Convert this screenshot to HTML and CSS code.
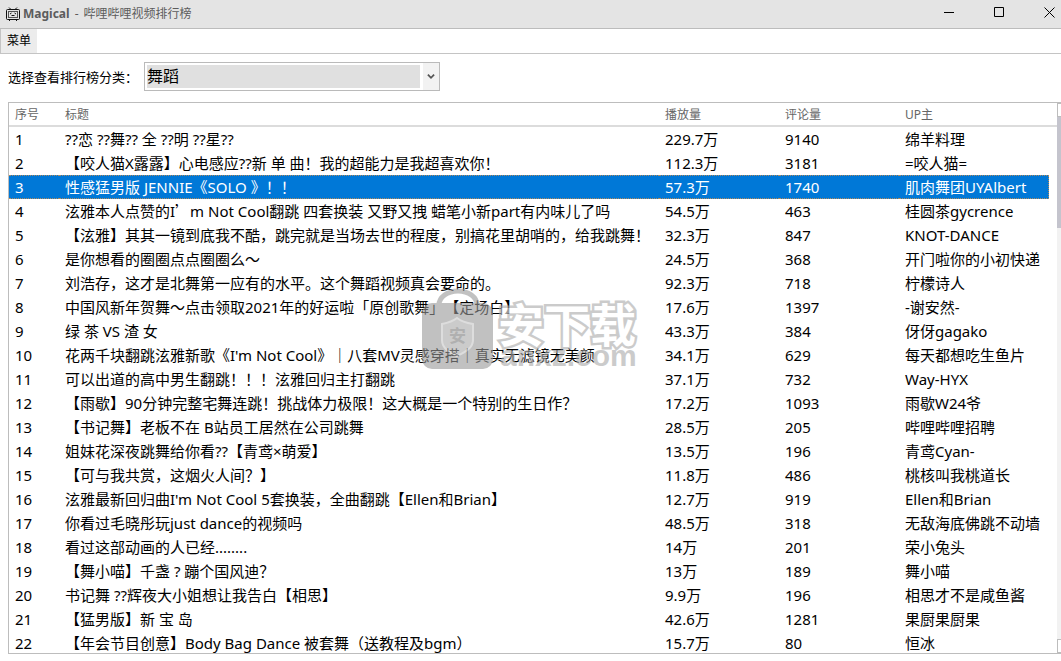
FILE: index.html
```html
<!DOCTYPE html>
<html lang="zh-CN">
<head>
<meta charset="utf-8">
<meta name="viewport" content="width=device-width, initial-scale=1">
<title>Magical - 哔哩哔哩视频排行榜</title>
<link rel="stylesheet" href="styles.css">
</head>
<body>
<div class="window">
  <header class="titlebar">
    <svg class="app-icon" viewBox="0 0 14 14" fill="none" stroke="#111" aria-hidden="true"><path d="M3 .5 5 2.5M11 .5 9 2.5"/><rect x=".5" y="2.5" width="13" height="10" rx="1"/><rect x="2.5" y="4.5" width="9" height="6" stroke="#555"/><path d="M4 7 5.5 6M10 7 8.5 6M5.5 8.5h3M3 13.5h1M10 13.5h1"/></svg>
    <h1 class="title"><b>Magical</b> <span>-</span> <span>哔哩哔哩视频排行榜</span></h1>
    <div class="controls">
      <button class="control" aria-label="最小化"><svg viewBox="0 0 11 11"><path d="M0 5.5h10"/></svg></button>
      <button class="control" aria-label="最大化"><svg viewBox="0 0 11 11"><path d="M.5.5h9v9h-9z"/></svg></button>
      <button class="control control-close" aria-label="关闭"><svg viewBox="0 0 11 11"><path d="m.5.5 10 10M10.5.5l-10 10"/></svg></button>
    </div>
  </header>
  <nav class="menubar"><button class="menu-item">菜单</button></nav>
  <div class="filter">
    <label for="category">选择查看排行榜分类：</label>
    <div class="combo">
      <select id="category"><option>舞蹈</option></select>
      <svg class="combo-arrow" viewBox="0 0 9 6" aria-hidden="true"><path d="m1 1 3.5 3.5L8 1"/></svg>
    </div>
  </div>
  <main class="list">
    <div class="list-view">
    <table class="ranking">
      <colgroup><col class="col-rank"><col class="col-name"><col class="col-num"><col class="col-num"><col><col class="col-gutter"></colgroup>
      <thead><tr><th>序号</th><th>标题</th><th>播放量</th><th>评论量</th><th colspan="2">UP主</th></tr></thead>
      <tbody>
        <tr><td>1</td><td>??恋 ??舞?? 全 ??明 ??星??</td><td>229.7万</td><td>9140</td><td>绵羊料理</td></tr>
        <tr><td>2</td><td>【咬人猫X露露】心电感应??新 单 曲！我的超能力是我超喜欢你！</td><td>112.3万</td><td>3181</td><td>=咬人猫=</td></tr>
        <tr class="selected"><td>3</td><td>性感猛男版 JENNIE《SOLO 》！！</td><td>57.3万</td><td>1740</td><td>肌肉舞团UYAlbert</td></tr>
        <tr><td>4</td><td>泫雅本人点赞的I<span class="wide">’</span>m Not Cool翻跳 四套换装 又野又拽 蜡笔小新part有内味儿了吗</td><td>54.5万</td><td>463</td><td>桂圆茶gycrence</td></tr>
        <tr><td>5</td><td>【泫雅】其其一镜到底我不酷，跳完就是当场去世的程度，别搞花里胡哨的，给我跳舞！</td><td>32.3万</td><td>847</td><td>KNOT-DANCE</td></tr>
        <tr><td>6</td><td>是你想看的圈圈点点圈圈么～</td><td>24.5万</td><td>368</td><td>开门啦你的小初快递</td></tr>
        <tr><td>7</td><td>刘浩存，这才是北舞第一应有的水平。这个舞蹈视频真会要命的。</td><td>92.3万</td><td>718</td><td>柠檬诗人</td></tr>
        <tr><td>8</td><td>中国风新年贺舞～点击领取2021年的好运啦「原创歌舞」【定场白】</td><td>17.6万</td><td>1397</td><td>-谢安然-</td></tr>
        <tr><td>9</td><td>绿 茶 VS 渣 女</td><td>43.3万</td><td>384</td><td>伢伢gagako</td></tr>
        <tr><td>10</td><td>花两千块翻跳泫雅新歌《I'm Not Cool》｜八套MV灵感穿搭｜真实无滤镜无美颜</td><td>34.1万</td><td>629</td><td>每天都想吃生鱼片</td></tr>
        <tr><td>11</td><td>可以出道的高中男生翻跳！！！泫雅回归主打翻跳</td><td>37.1万</td><td>732</td><td>Way-HYX</td></tr>
        <tr><td>12</td><td>【雨歇】90分钟完整宅舞连跳！挑战体力极限！这大概是一个特别的生日作？</td><td>17.2万</td><td>1093</td><td>雨歇W24爷</td></tr>
        <tr><td>13</td><td>【书记舞】老板不在 B站员工居然在公司跳舞</td><td>28.5万</td><td>205</td><td>哔哩哔哩招聘</td></tr>
        <tr><td>14</td><td>姐妹花深夜跳舞给你看??【青鸢×萌爱】</td><td>13.5万</td><td>196</td><td>青鸢Cyan-</td></tr>
        <tr><td>15</td><td>【可与我共赏，这烟火人间？】</td><td>11.8万</td><td>486</td><td>桃核叫我桃道长</td></tr>
        <tr><td>16</td><td>泫雅最新回归曲I'm Not Cool 5套换装，全曲翻跳【Ellen和Brian】</td><td>12.7万</td><td>919</td><td>Ellen和Brian</td></tr>
        <tr><td>17</td><td>你看过毛晓彤玩just dance的视频吗</td><td>48.5万</td><td>318</td><td>无敌海底佛跳不动墙</td></tr>
        <tr><td>18</td><td>看过这部动画的人已经........</td><td>14万</td><td>201</td><td>荣小兔头</td></tr>
        <tr><td>19</td><td>【舞小喵】千盏 ? 蹦个国风迪？</td><td>13万</td><td>189</td><td>舞小喵</td></tr>
        <tr><td>20</td><td>书记舞 ??辉夜大小姐想让我告白【相思】</td><td>9.9万</td><td>196</td><td>相思才不是咸鱼酱</td></tr>
        <tr><td>21</td><td>【猛男版】新 宝 岛</td><td>42.6万</td><td>1281</td><td>果厨果厨果</td></tr>
        <tr><td>22</td><td>【年会节目创意】Body Bag Dance 被套舞（送教程及bgm）</td><td>15.7万</td><td>80</td><td>恒冰</td></tr>
      </tbody>
    </table>
    </div>
    <div class="scrollbar"><span class="step"></span><span class="thumb"></span><span class="step step-down"></span></div>
  </main>
  <div class="watermark" aria-hidden="true">
    <div class="bag">
      <svg viewBox="0 0 72 82"><path d="M17 18v-1a19 14 0 0 1 38 0v1" fill="none" stroke="#999" stroke-width="5"/><rect x="0" y="15" width="71" height="66" rx="10" fill="#999"/><path d="M35 30c-5 4-10 5-15 6v16c0 9 9 13 15 16 6-3 16-7 16-16V36c-6-1-11-2-16-6z" fill="#aaa" stroke="#c8c8c8" stroke-width="2"/></svg>
      <span class="seal">安</span>
    </div>
    <div class="brand"><span class="brand-name">安下载</span><span class="brand-site">anxz.com</span></div>
  </div>
</div>
</body>
</html>
```
FILE: styles.css
```css
* { box-sizing: border-box; }

body {
  margin: 0;
  background: #fff;
  color: #000;
  font-family: "Noto Sans", "Noto Sans CJK SC", sans-serif;
  font-size: 15px;
  text-spacing-trim: space-all;
}

button { padding: 0; border: 0; background: none; color: inherit; font: inherit; }

.window {
  position: relative;
  display: flex;
  flex-direction: column;
  height: 100vh;
  padding-bottom: 7px;
  overflow: hidden;
}

.titlebar {
  display: flex;
  flex: none;
  align-items: center;
  height: 29px;
  padding-left: 6px;
  background: #e4e4e4;
  border-bottom: 1px solid #bcbcbc;
}

.app-icon { width: 14px; height: 14px; margin-right: 3px; }

.title {
  display: flex;
  gap: 5px;
  margin: 0;
  color: #5c5c5c;
  font-size: 12px;
  font-weight: 400;
  line-height: 20px;
}

.controls { display: flex; align-self: stretch; margin-left: auto; }
.control { display: flex; width: 50px; padding: 7px 0 0 20px; }
.control-close { width: 37px; }
.control svg { width: 11px; height: 11px; fill: none; stroke: #000; }

.menubar {
  display: flex;
  flex: none;
  height: 25px;
  border-bottom: 1px solid #c4c4c4;
  border-left: 1px solid #c4c4c4;
}

.menu-item { width: 36px; background: #ececec; font-size: 12px; line-height: 22px; }

.filter {
  display: flex;
  flex: none;
  align-items: center;
  gap: 6px;
  padding: 8px;
  font-size: 13px;
}

.combo { position: relative; width: 296px; height: 29px; border: 1px solid #bababa; padding: 2px; }

.combo select {
  display: block;
  width: calc(100% - 17px);
  height: 100%;
  padding: 0;
  border: 0;
  border-radius: 0;
  outline: 0;
  appearance: none;
  background: #e0e0e0;
  color: #000;
  font: inherit;
  font-size: 16px;
  line-height: 23px;
}

.combo-arrow {
  position: absolute;
  top: 0;
  right: 0;
  width: 16px;
  height: 100%;
  padding: 0 4px;
  background: #f2f2f2;
  fill: none;
  stroke: #555;
  stroke-width: 2;
  pointer-events: none;
}

.list {
  display: flex;
  flex: 1;
  min-height: 0;
  margin-left: 8px;
  margin-top: 3px;
  border: 1px solid #bdbdbd;
  border-right: 0;
}

.list-view { flex: 1; min-width: 0; overflow: hidden; }

.ranking {
  width: 100%;
  border-collapse: separate;
  border-spacing: 0;
  table-layout: fixed;
}

.col-rank { width: 50px; }
.col-name { width: 600px; }
.col-num { width: 120px; }
.col-gutter { width: 8px; }

th, td {
  height: 24px;
  padding: 0 0 0 6px;
  line-height: 23px;
  text-align: left;
  white-space: nowrap;
}

th {
  padding-top: 1px;
  border-bottom: 2px solid #dcdcdc;
  color: #666;
  font-size: 12px;
  font-weight: 400;
  line-height: 21px;
}

.selected td {
  background: #0078d7;
  border-top: 1px dotted #b08a5c;
  border-bottom: 1px dotted #b08a5c;
  color: #fff;
  line-height: 22px;
}
.selected td:last-child { border-right: 1px dotted #b08a5c; }

.wide { font-family: "Noto Sans CJK SC", sans-serif; }

.scrollbar { display: flex; flex-direction: column; width: 4px; background: #f2f2f2; }
.step { flex: none; height: 14px; background: #fff; border: 1px solid #bdbdbd; border-right: 0; }
.thumb { height: 111px; background: #c4c4cd; }
.step-down { margin-top: auto; }

.watermark {
  position: absolute;
  top: 288px;
  left: 422px;
  display: flex;
  gap: 4px;
  opacity: .6;
  pointer-events: none;
}

.bag { position: relative; width: 72px; }
.bag svg { display: block; width: 72px; height: 82px; }
.seal {
  position: absolute;
  top: 35px;
  left: 27px;
  color: #7c7c7c;
  font-size: 17px;
  font-weight: 700;
  line-height: 26px;
}

.brand { display: flex; flex-direction: column; padding-top: 14px; }
.brand-name {
  color: #fff;
  font-size: 46px;
  font-weight: 700;
  line-height: 44px;
  paint-order: stroke fill;
  -webkit-text-stroke: 5px #aaa;
}
.brand-site {
  padding-left: 2px;
  color: #aaa;
  font-family: "Liberation Sans", sans-serif;
  font-size: 30px;
  font-weight: 700;
  line-height: 20px;
}
```
